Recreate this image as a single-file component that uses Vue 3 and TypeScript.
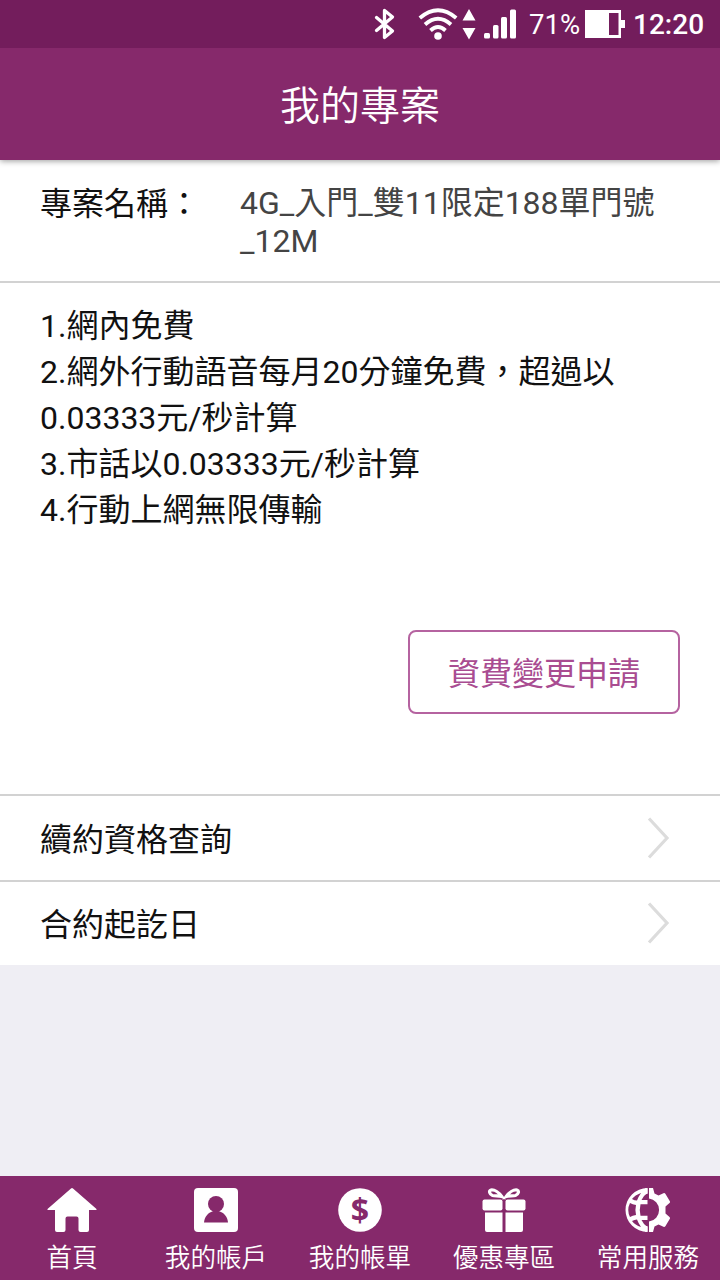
<script setup lang="ts">
interface Tab {
  id: string
  label: string
}

const details: string[] = [
  '1.網內免費',
  '2.網外行動語音每月20分鐘免費，超過以0.03333元/秒計算',
  '3.市話以0.03333元/秒計算',
  '4.行動上網無限傳輸',
]

const links: string[] = ['續約資格查詢', '合約起訖日']

const tabs: Tab[] = [
  { id: 'home', label: '首頁' },
  { id: 'account', label: '我的帳戶' },
  { id: 'bill', label: '我的帳單' },
  { id: 'offers', label: '優惠專區' },
  { id: 'services', label: '常用服務' },
]
</script>

<template>
  <div class="screen">
    <div class="status">
      <svg class="signals" width="158" height="48" viewBox="0 0 158 48">
        <path d="M7.500 17.500 L23.500 31 L15.500 37.500 V10.500 L23.500 17 L7.500 30.500" fill="none" stroke="#fff" stroke-width="3.300" stroke-linecap="round" stroke-linejoin="round" />
        <g fill="none" stroke="#fff" stroke-width="3.800">
          <path d="M50.800 18 Q69 2.500 87.200 18" />
          <path d="M56 24.500 Q69 13 82 24.500" />
          <path d="M61.500 30.500 Q69 23.500 76.500 30.500" />
        </g>
        <circle cx="69" cy="36" r="3.800" fill="#fff" />
        <path d="M93.500 20.500 L100 9 L106.500 20.500 Z M93.500 28 H106.500 L100 39.500 Z" fill="#fff" />
        <g fill="#fff">
          <rect x="115" y="33" width="6" height="5.500" rx="1.500" />
          <rect x="124" y="25" width="5.500" height="13.500" rx="1.500" />
          <rect x="132" y="17" width="6" height="21.500" rx="1.500" />
          <rect x="141" y="9.500" width="6" height="29" rx="1.500" />
        </g>
      </svg>
      <span class="percent">71%</span>
      <svg class="battery" width="42" height="28" viewBox="0 0 42 28">
        <path fill-rule="evenodd" fill="#fff" d="M0 0 H36 V10 H40 V18 H36 V28 H0 Z M24 3 V25 H33.500 V3 Z" />
      </svg>
      <span class="clock">12:20</span>
    </div>

    <header class="header">我的專案</header>

    <main class="content">
      <section class="plan">
        <div class="plan-label">專案名稱：</div>
        <div class="plan-name">4G_入門_雙11限定188單門號_12M</div>
      </section>

      <section class="details">
        <p v-for="item in details" :key="item" class="detail">{{ item }}</p>
        <button class="change" type="button">資費變更申請</button>
      </section>

      <a v-for="link in links" :key="link" class="link">
        <span class="link-label">{{ link }}</span>
        <svg width="24" height="44" viewBox="0 0 24 44">
          <path d="M2 2.500 L20 22 L2 41.500" fill="none" stroke="#dcdcdc" stroke-width="3.200" />
        </svg>
      </a>
    </main>

    <nav class="tabs">
      <div v-for="tab in tabs" :key="tab.id" class="tab">
        <svg class="tab-icon" width="52" height="46" viewBox="0 0 52 46" fill="#fff">
          <path v-if="tab.id === 'home'" d="M25 1.500 Q26 0.500 27 1.500 L50.500 22 Q51 23 50 23 H43 V43 Q43 45 41 45 H34.500 Q32.500 45 32.500 43 V31.500 Q32.500 29.500 30.500 29.500 H21.500 Q19.500 29.500 19.500 31.500 V43 Q19.500 45 17.500 45 H11 Q9 45 9 43 V23 H2 Q1 23 1.500 22 Z" />
          <template v-else-if="tab.id === 'account'">
            <rect x="4" y="1" width="44" height="44" rx="4" />
            <circle cx="26" cy="17" r="8" class="cut" />
            <path class="cut" d="M14 35.500 C14.500 29 18.500 25.500 23.500 24 H28.500 C33.500 25.500 37.500 29 38 35.500 Z" />
          </template>
          <template v-else-if="tab.id === 'bill'">
            <circle cx="26" cy="23" r="21.800" />
            <text class="dollar cut" x="26" y="34.500" text-anchor="middle">$</text>
          </template>
          <template v-else-if="tab.id === 'offers'">
            <rect x="4.500" y="12.500" width="20" height="11" rx="2" />
            <rect x="27.500" y="12.500" width="20" height="11" rx="2" />
            <path d="M7 25.500 H24.500 V45 H9 Q7 45 7 43 Z M27.500 25.500 H45 V43 Q45 45 43 45 H27.500 Z" />
            <g fill="none" stroke="#fff" stroke-width="3.200">
              <path d="M23.700 9.500 C21 5.500 16.500 2.500 13 3 C10.500 3.800 11.500 7.500 14.500 8.500 C17 9.200 21 8.500 23.700 9.500 Z" />
              <path d="M28.300 9.500 C31 5.500 35.500 2.500 39 3 C41.500 3.800 40.500 7.500 37.500 8.500 C35 9.200 31 8.500 28.300 9.500 Z" />
            </g>
          </template>
          <template v-else>
            <path fill-rule="evenodd" d="M25.500 1 A22 22 0 0 0 25.500 45 Z M19 6 Q13 8 10 12 Q12.500 13.500 15 13.500 Q16.500 9.500 19 6 Z M25.500 6 Q21.500 8.500 19.500 13 H25.500 Z M8 16 Q4.500 23 8 30 Q10.500 28.500 14 28 Q12.800 23 14 18 Q10.500 17.500 8 16 Z M18.500 17.200 Q17 23 18.500 28.800 H25.500 V17.200 Z M19 40 Q13 38 10 34 Q12.500 32.500 15 32.500 Q16.500 36.500 19 40 Z M25.500 40 Q21.500 37.500 19.500 33 H25.500 Z" />
            <path d="M23 1.200 H25.500 V7 H23 Z M23 39 H25.500 V44.800 H23 Z" />
            <path d="M27 1 H31 L32.500 6.500 L36.500 8.500 L42 6 Q43 6 43.500 7 L48 14.500 Q48.200 15.500 47.500 16 L43.500 19.500 V26.500 L47.500 30 Q48.200 30.500 48 31.500 L43.500 39 Q43 40 42 40 L36.500 37.500 L32.500 39.500 L31 45 H27 V34.500 A11.600 11.600 0 0 0 27 11.500 Z" />
          </template>
        </svg>
        <span class="tab-label">{{ tab.label }}</span>
      </div>
    </nav>
  </div>
</template>

<style>
body {
  margin: 0;
}
</style>

<style scoped>
.screen {
  display: flex;
  flex-direction: column;
  width: 720px;
  height: 1280px;
  overflow: hidden;
  background: #efeef4;
  color: #111;
  font-family: Roboto, "Noto Sans CJK TC", sans-serif;
  font-size: 32px;
}

.status {
  position: relative;
  z-index: 1;
  display: flex;
  align-items: center;
  flex: none;
  box-sizing: border-box;
  height: 48px;
  padding-left: 369px;
  background: #731d5c;
  color: #fff;
  white-space: nowrap;
}

.percent {
  width: 56px;
  padding: 2px 0 0 2px;
  font-size: 27.5px;
  line-height: 46px;
}

.battery {
  flex: none;
}

.signals {
  flex: none;
}

.clock {
  margin-left: 6px;
  padding-top: 2px;
  font-size: 28px;
  font-weight: 500;
  line-height: 46px;
}

.header {
  position: relative;
  flex: none;
  height: 112px;
  background: #86296b;
  box-shadow: 0 1px 6px rgba(0, 0, 0, 0.4);
  color: #fff;
  font-family: "Noto Sans CJK TC DemiLight", "Noto Sans CJK TC", sans-serif;
  font-size: 40px;
  font-weight: 350;
  line-height: 110px;
  text-align: center;
}

.content {
  flex: 1;
}

.plan {
  display: flex;
  box-sizing: border-box;
  height: 123px;
  padding: 24px 56px 0 40px;
  border-bottom: 2px solid #d2d2d2;
  background: #fff;
  line-height: 38px;
}

.plan-label {
  flex: none;
  width: 200px;
  padding-top: 1px;
}

.plan-name {
  flex: 1;
  color: #444;
  word-break: break-all;
}

.details {
  display: flex;
  flex-direction: column;
  box-sizing: border-box;
  height: 511px;
  padding: 20px 40px 80px;
  background: #fff;
  line-height: 46px;
}

.detail {
  margin: 0;
}

.change {
  align-self: flex-end;
  box-sizing: border-box;
  width: 272px;
  height: 84px;
  margin-top: auto;
  padding: 4px 0 0;
  border: 2px solid #b563a0;
  border-radius: 8px;
  background: #fff;
  color: #a94c91;
  font: inherit;
}

.link {
  display: flex;
  align-items: center;
  justify-content: space-between;
  box-sizing: border-box;
  height: 85.5px;
  padding: 0 49px 0 40px;
  border-top: 2px solid #d2d2d2;
  background: #fff;
}

.link-label {
  padding-bottom: 2px;
}

.tabs {
  display: flex;
  flex: none;
  height: 104px;
  background: #86296b;
  color: #fff;
}

.tab {
  display: flex;
  flex: 1;
  flex-direction: column;
  align-items: center;
  padding-top: 11px;
}

.tab-icon {
  display: block;
}

.cut {
  fill: #86296b;
}

.dollar {
  font-family: "Open Sans", sans-serif;
  font-size: 32px;
  font-weight: 700;
}

.tab-label {
  font-family: "Noto Sans CJK TC DemiLight", "Noto Sans CJK TC", sans-serif;
  font-size: 25.6px;
  font-weight: 350;
  line-height: 45px;
}
</style>
